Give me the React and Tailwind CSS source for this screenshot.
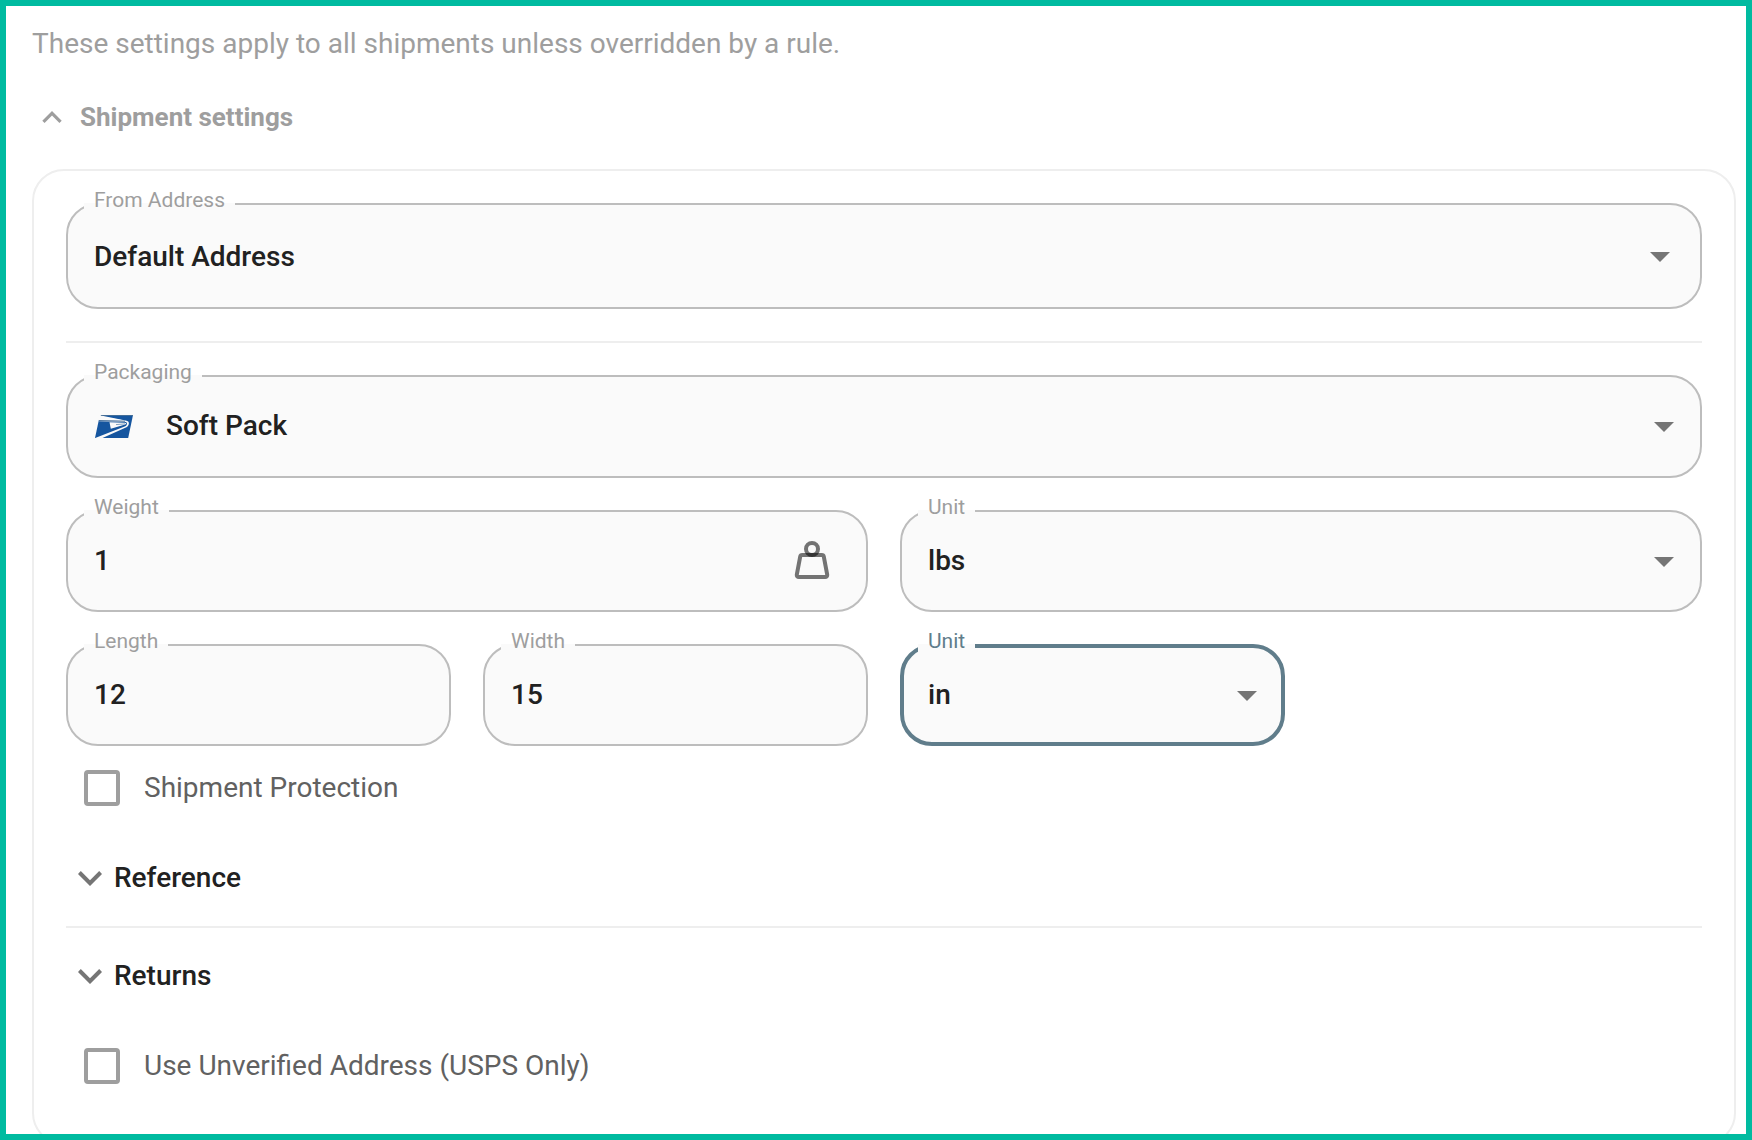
import { useState } from "react";

const UspsLogo = () => (
  <svg viewBox="0 0 38 23" className="h-[23px] w-[38px]" aria-hidden="true">
    <path d="M6 0H38L33.200 23H0L3.800 5.200z" fill="#15559f" />
    <path
      d="M3 .6L6 .6 30.500 5.400c2.800.5 4 1.500 3.200 4-.5 1.600-1.600 2.500-3.400 3.300L7.500 23H.2L29 11.800c1.800-.8 2.600-1.500 2.900-2.900.3-1.400-.5-1.900-2.200-1.900L4 6.300z"
      fill="#fafafa"
    />
    <path d="M5 1.200L29.500 5.600 4.300 5z" fill="#fafafa" />
    <path d="M6 .3H38" stroke="#5d7a92" strokeWidth="0.8" />
    <path d="M4 5.600L30 6.200" stroke="#3c6795" strokeWidth="1" />
    <path d="M14.500 7.200L29.800 7.700c1.600 0 1.600 1.200.4 1.800L15.800 13.800z" fill="#fafafa" />
    <path d="M21 9.600l9-.7" stroke="#6b8cab" strokeWidth="0.8" />
  </svg>
);

const WeightIcon = () => (
  <svg viewBox="0 0 36 38" className="h-[38px] w-9" fill="none" stroke="#000" strokeWidth="4" aria-hidden="true">
    <circle cx="18" cy="8" r="6" strokeOpacity="0.54" />
    <path
      d="M8.200 14h19.600c1 0 1.800.7 2 1.700l3.400 18c.2 1.300-.7 2.300-2 2.300H4.800c-1.300 0-2.200-1-2-2.300l3.400-18c.2-1 1-1.700 2-1.700z"
      strokeOpacity="0.54"
    />
  </svg>
);

const Chevron = ({ up }) => (
  <svg viewBox="6 8.590 12 7.410" className={up ? "h-3 w-5 rotate-180" : "h-[15px] w-6"} fill="currentColor" aria-hidden="true">
    <path d="M16.590 8.590L12 13.170 7.410 8.590 6 10l6 6 6-6z" />
  </svg>
);

const Field = ({ id, label, focused, children }) => (
  <div className="relative">
    {children}
    <label
      htmlFor={id}
      className={`absolute -top-[15px] left-[18px] bg-[linear-gradient(#fff_15px,#fafafa_15px)] px-2.5 text-[21px] leading-6 ${
        focused ? "text-[#607d8b]" : "text-[#9e9e9e]"
      }`}
    >
      {label}
    </label>
  </div>
);

const box = "block w-full appearance-none rounded-[32px] bg-[#fafafa] text-[28px] font-medium text-[#212121] outline-none";
const idle = "border-2 border-[#bdbdbd] pl-[26px]";
const active = "border-4 border-[#607d8b] pl-6";

const Select = ({ id, label, options, height = "h-[102px]", arrow = "right-7 pt-0.5", focused, logo }) => (
  <Field id={id} label={label} focused={focused}>
    <select id={id} className={`${box} ${height} ${focused ? active : logo ? "border-2 border-[#bdbdbd] pl-[98px]" : idle}`}>
      {options.map((o) => (
        <option key={o}>{o}</option>
      ))}
    </select>
    {logo && <span className="pointer-events-none absolute inset-y-0 left-[29px] flex items-center">{logo}</span>}
    <span className={`pointer-events-none absolute inset-y-0 flex items-center ${arrow}`}>
      <svg viewBox="0 0 20 10" className="h-2.5 w-5" fill="#757575" aria-hidden="true">
        <path d="M0 0h20L10 10z" />
      </svg>
    </span>
  </Field>
);

const Input = ({ id, label, value, icon }) => {
  const [text, setText] = useState(value);
  return (
    <Field id={id} label={label}>
      <input id={id} value={text} onChange={(e) => setText(e.target.value)} className={`${box} ${idle} h-[102px] pb-0.5`} />
      {icon && <span className="pointer-events-none absolute inset-y-0 right-[38px] flex items-center pb-0.5">{icon}</span>}
    </Field>
  );
};

const Checkbox = ({ id, label }) => (
  <div className="flex h-[84px] items-center gap-6 pl-[18px]">
    <input id={id} type="checkbox" className="size-9 appearance-none rounded border-4 border-[#9e9e9e] checked:bg-[#9e9e9e]" />
    <label htmlFor={id} className="text-[28px] text-[#616161]">
      {label}
    </label>
  </div>
);

const Toggle = ({ label }) => (
  <button type="button" className="flex h-24 w-full items-center gap-3 pl-3 text-[28px] font-medium text-[#212121]">
    <span className="text-[#757575]">
      <Chevron />
    </span>
    {label}
  </button>
);

const App = () => {
  return (
    <main className="h-screen overflow-hidden border-6 border-[#00bba0] bg-white pt-4 pr-2.5 pl-[26px] font-[Roboto,sans-serif]">
      <p className="text-[28px] leading-[44px] text-[#9e9e9e]">These settings apply to all shipments unless overridden by a rule.</p>

      <button type="button" className="mt-[30px] flex h-[42px] items-center gap-[18px] pl-2.5 text-[26px] font-bold text-[#9e9e9e]">
        <Chevron up />
        Shipment settings
      </button>

      <section className="mt-[31px] rounded-[32px] border-2 border-[#eeeeee] px-8 pt-8 pb-[35px]">
        <Select id="from" label="From Address" options={["Default Address"]} height="h-[106px] pt-0.5" arrow="right-8 pt-0.5" />

        <hr className="my-8 border-t-2 border-[#eeeeee]" />

        <div className="grid grid-cols-4 gap-8">
          <div className="col-span-4">
            <Select
              id="packaging"
              label="Packaging"
              options={["Soft Pack"]}
              height="h-[103px] pb-0.5"
              arrow="right-7"
              logo={<UspsLogo />}
            />
          </div>
          <div className="col-span-2">
            <Input id="weight" label="Weight" value="1" icon={<WeightIcon />} />
          </div>
          <div className="col-span-2">
            <Select id="weight-unit" label="Unit" options={["lbs", "oz"]} />
          </div>
          <Input id="length" label="Length" value="12" />
          <Input id="width" label="Width" value="15" />
          <Select id="size-unit" label="Unit" options={["in", "cm"]} focused />
        </div>

        <Checkbox id="protection" label="Shipment Protection" />
        <Toggle label="Reference" />
        <hr className="border-t-2 border-[#eeeeee]" />
        <Toggle label="Returns" />
        <Checkbox id="unverified" label="Use Unverified Address (USPS Only)" />
      </section>
    </main>
  );
};

export default App;
